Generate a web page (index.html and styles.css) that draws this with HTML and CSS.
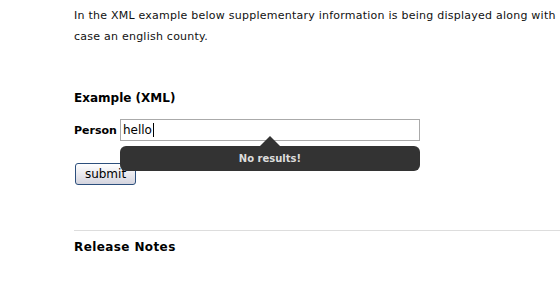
FILE: index.html
```html
<!DOCTYPE html>
<html>
<head>
<meta charset="utf-8">
<link rel="stylesheet" href="styles.css">
</head>
<body>
<div class="page">
  <p class="intro">In the XML example below supplementary information is being displayed along with<br>case an english county.</p>
  <h3 class="section-title example-title">Example (XML)</h3>
  <form class="example-form">
    <div class="field">
      <label class="field-label">Person</label>
      <div class="input-wrap">
        <input class="text-input" type="text" value="hello">
        <span class="caret"></span>
        <div class="tooltip">No results!</div>
      </div>
    </div>
    <button class="submit-btn" type="button">submit</button>
  </form>
  <hr class="divider">
  <h3 class="section-title notes-title">Release Notes</h3>
</div>
</body>
</html>
```
FILE: styles.css
```css
html, body {
  margin: 0;
  padding: 0;
  background: #fff;
  overflow: hidden;
}
body {
  font-family: "DejaVu Sans", Verdana, sans-serif;
  color: #000;
}
.page {
  padding: 5px 0 0 74px;
}
.intro {
  margin: 0;
  font-size: 11px;
  line-height: 21px;
  letter-spacing: 0.24px;
  white-space: nowrap;
  color: #111;
}
.section-title {
  margin: 0;
  font-size: 12px;
  font-weight: bold;
}
.example-title {
  margin-top: 44px;
}
.example-form {
  margin-top: 14px;
}
.field {
  display: flex;
  align-items: center;
  gap: 3px;
}
.field-label {
  font-size: 11px;
  font-weight: bold;
}
.input-wrap {
  position: relative;
}
.text-input {
  box-sizing: border-box;
  width: 300px;
  height: 22px;
  margin: 0;
  padding: 0 2px;
  border: 1px solid #aaa;
  font-family: "DejaVu Sans", sans-serif;
  font-size: 12px;
  color: #000;
  outline: none;
}
.caret {
  position: absolute;
  left: 33px;
  top: 4px;
  width: 1px;
  height: 14px;
  background: #000;
}
.tooltip {
  position: absolute;
  left: 0;
  top: 27px;
  width: 300px;
  height: 25px;
  line-height: 25px;
  background: #333;
  border-radius: 6px;
  color: #ddd;
  font-size: 10px;
  font-weight: bold;
  text-align: center;
}
.tooltip::before {
  content: "";
  position: absolute;
  left: 140px;
  top: -10px;
  border-left: 10px solid transparent;
  border-right: 10px solid transparent;
  border-bottom: 10px solid #333;
}
.submit-btn {
  margin: 22px 0 0 1px;
  width: 61px;
  height: 22px;
  padding: 0;
  border: 1px solid #2c4f7c;
  border-radius: 3px;
  background: linear-gradient(#ffffff, #e6e6ec 60%, #d4d4de);
  font-family: "DejaVu Sans", sans-serif;
  font-size: 12px;
  color: #000;
}
.divider {
  margin: 45px 0 0 0;
  border: 0;
  border-top: 1px solid #ddd;
  height: 0;
}
.notes-title {
  margin-top: 9px;
  letter-spacing: 0.4px;
}
```
